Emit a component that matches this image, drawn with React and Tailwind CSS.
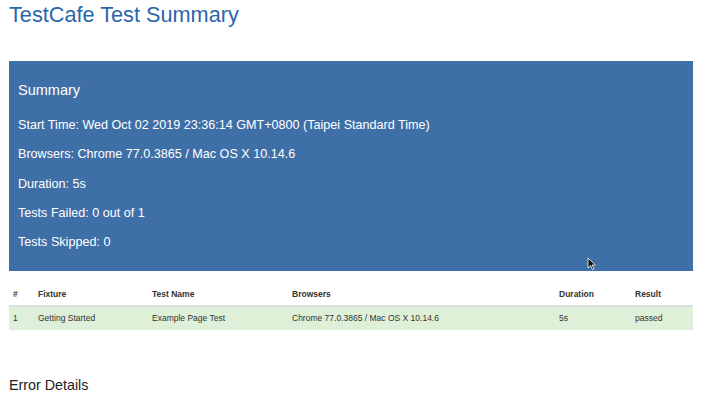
export default function App() {
  const font = { fontFamily: '"Liberation Sans", Arial, sans-serif' };
  const lines = [
    "Start Time: Wed Oct 02 2019 23:36:14 GMT+0800 (Taipei Standard Time)",
    "Browsers: Chrome 77.0.3865 / Mac OS X 10.14.6",
    "Duration: 5s",
    "Tests Failed: 0 out of 1",
    "Tests Skipped: 0",
  ];
  return (
    <div className="relative w-[708px] h-[400px] overflow-hidden bg-white px-[9px]" style={font}>
      <h1 className="pt-[2px] text-[21.7px] leading-[25px] text-[#2b65aa]">TestCafe Test Summary</h1>
      <div className="mt-[34px] h-[210px] w-[684px] bg-[#3f6fa7] px-[9px] pt-[19px] text-white">
        <div className="text-[14.5px] leading-[20px]">Summary</div>
        <div className="mt-[17px] flex flex-col gap-[12px]">
          {lines.map((l) => (
            <div key={l} className="text-[12.6px] leading-[17.3px]">{l}</div>
          ))}
        </div>
      </div>
      <div className="mt-[13px] w-[684px] text-[8.5px] text-[#333]">
        <div className="flex h-[23px] items-center border-b-2 border-[#dddddd] font-bold">
          <div className="w-[29px] pl-[4px]">#</div>
          <div className="w-[114px]">Fixture</div>
          <div className="w-[140px]">Test Name</div>
          <div className="w-[267px]">Browsers</div>
          <div className="w-[76px]">Duration</div>
          <div>Result</div>
        </div>
        <div className="flex h-[23px] items-center bg-[#dff0d8]">
          <div className="w-[29px] pl-[4px]">1</div>
          <div className="w-[114px]">Getting Started</div>
          <div className="w-[140px]">Example Page Test</div>
          <div className="w-[267px]">Chrome 77.0.3865 / Mac OS X 10.14.6</div>
          <div className="w-[76px]">5s</div>
          <div>passed</div>
        </div>
      </div>
      <h2 className="mt-[45px] text-[14.3px] leading-[20px] text-[#222]">Error Details</h2>
      <svg className="absolute left-[587px] top-[257px]" width="9" height="13" viewBox="0 0 9 13">
        <path d="M1 1 L1 11 L3.5 8.5 L5.5 12.5 L7 11.8 L5 8 L8.3 8 Z" fill="#111" stroke="#fff" strokeWidth="0.8" />
      </svg>
    </div>
  );
}
